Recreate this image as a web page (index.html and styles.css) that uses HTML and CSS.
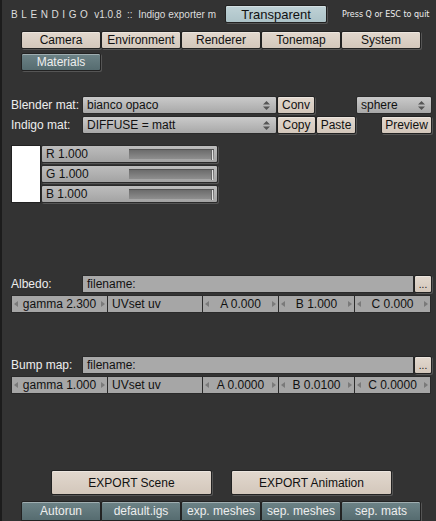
FILE: index.html
```html
<!DOCTYPE html>
<html lang="en">
<head>
    <meta charset="UTF-8">
    <title>Blendigo</title>
    <link rel="stylesheet" href="styles.css">
</head>
<body>
    <div class="app">
        <!-- header -->
        <div class="header">
            <div class="title"><span class="logo">BLENDIGO</span> v1.0.8 &nbsp;:: &nbsp;Indigo exporter m</div>
            <button class="btn btn-blue transparent">Transparent</button>
            <div class="quit">Press Q or ESC to quit</div>
        </div>

        <!-- tabs -->
        <div class="row tabs">
            <button class="btn btn-beige tab">Camera</button>
            <button class="btn btn-beige tab">Environment</button>
            <button class="btn btn-beige tab">Renderer</button>
            <button class="btn btn-beige tab">Tonemap</button>
            <button class="btn btn-beige tab">System</button>
        </div>
        <div class="row tabs tabs2">
            <button class="btn btn-teal tab">Materials</button>
        </div>

        <!-- materials -->
        <div class="row mat-row first">
            <div class="label">Blender mat:</div>
            <div class="menu wide"><span>bianco opaco</span><svg viewBox="0 0 7 9"><path d="M3.5 0L7 3.5H0z M3.5 9L0 5.5h7z"/></svg></div>
            <button class="btn btn-beige conv">Conv</button>
            <div class="menu sphere"><span>sphere</span><svg viewBox="0 0 7 9"><path d="M3.5 0L7 3.5H0z M3.5 9L0 5.5h7z"/></svg></div>
        </div>
        <div class="row mat-row">
            <div class="label">Indigo mat:</div>
            <div class="menu wide"><span>DIFFUSE = matt</span><svg viewBox="0 0 7 9"><path d="M3.5 0L7 3.5H0z M3.5 9L0 5.5h7z"/></svg></div>
            <button class="btn btn-beige copy">Copy</button>
            <button class="btn btn-beige paste">Paste</button>
            <button class="btn btn-beige preview">Preview</button>
        </div>

        <!-- colour -->
        <div class="row colour">
            <div class="swatch"></div>
            <div class="sliders">
                <div class="slider"><span>R 1.000</span><div class="track"><i></i></div></div>
                <div class="slider"><span>G 1.000</span><div class="track"><i></i></div></div>
                <div class="slider"><span>B 1.000</span><div class="track"><i></i></div></div>
            </div>
        </div>

        <!-- albedo -->
        <div class="row file-row albedo">
            <div class="label">Albedo:</div>
            <div class="field">filename:</div>
            <button class="btn btn-beige dots">...</button>
        </div>
        <div class="row nums">
            <div class="num gamma"><b class="la"></b>gamma 2.300<b class="ra"></b></div>
            <div class="num uv">UVset uv</div>
            <div class="num abc"><b class="la"></b>A 0.000<b class="ra"></b></div>
            <div class="num abc"><b class="la"></b>B 1.000<b class="ra"></b></div>
            <div class="num abc"><b class="la"></b>C 0.000<b class="ra"></b></div>
        </div>

        <!-- bump -->
        <div class="row file-row bump">
            <div class="label">Bump map:</div>
            <div class="field">filename:</div>
            <button class="btn btn-beige dots">...</button>
        </div>
        <div class="row nums">
            <div class="num gamma"><b class="la"></b>gamma 1.000<b class="ra"></b></div>
            <div class="num uv">UVset uv</div>
            <div class="num abc"><b class="la"></b>A 0.0000<b class="ra"></b></div>
            <div class="num abc"><b class="la"></b>B 0.0100<b class="ra"></b></div>
            <div class="num abc"><b class="la"></b>C 0.0000<b class="ra"></b></div>
        </div>

        <!-- export -->
        <div class="row export">
            <button class="btn btn-beige big">EXPORT Scene</button>
            <button class="btn btn-beige big">EXPORT Animation</button>
        </div>
        <div class="row tabs bottom">
            <button class="btn btn-teal tab">Autorun</button>
            <button class="btn btn-teal tab">default.igs</button>
            <button class="btn btn-teal tab">exp. meshes</button>
            <button class="btn btn-teal tab">sep. meshes</button>
            <button class="btn btn-teal tab">sep. mats</button>
        </div>
    </div>
</body>
</html>
```

FILE: styles.css
```css
* {
    box-sizing: border-box;
}

body {
    margin: 0;
    background-color: #333;
    font-family: "Liberation Sans", Arial, sans-serif;
    font-size: 12px;
    color: #e6e6e6;
    height: 521px;
    overflow: hidden;
}

.app {
    height: 521px;
    border-left: 2px solid #1c1c1c;
    padding-left: 9px;
    display: flex;
    flex-direction: column;
}

.row {
    display: flex;
    align-items: center;
}

/* header */
.header {
    display: flex;
    align-items: center;
    height: 29px;
    padding-bottom: 1px;
}

.title {
    width: 214px;
    white-space: nowrap;
    overflow: hidden;
    font-size: 10px;
    color: #ddd;
}

.logo {
    letter-spacing: 3.6px;
}

.quit {
    margin-left: 15px;
    font-family: "DejaVu Sans", sans-serif;
    font-size: 8px;
    color: #eee;
}

/* buttons */
.btn {
    font-family: "Liberation Sans", Arial, sans-serif;
    font-size: 12px;
    height: 18px;
    padding: 0;
    margin: 0;
    border: 1px solid #222;
    border-radius: 2px;
    color: #111;
    box-shadow: inset 0 1px 0 rgba(255, 255, 255, 0.35), 1px 1px 0 #555;
    cursor: pointer;
}

.btn-beige {
    background: linear-gradient(#e2d8ce, #d3c7bb);
}

.btn-blue {
    background: linear-gradient(#bfd2d6, #adc3c8);
}

.btn-teal {
    background: linear-gradient(#6d8387, #566c70);
    color: #eee;
}

.transparent {
    width: 102px;
    font-size: 13px;
}

.tabs {
    margin-left: 10px;
    margin-top: 2px;
}

.tab {
    width: 80px;
}

.tabs2 {
    margin-top: 4px;
}

/* material rows */
.mat-row {
    height: 18px;
    margin-top: 2px;
}

.mat-row.first {
    margin-top: 25px;
}

.label {
    width: 71px;
    white-space: nowrap;
    color: #eee;
}

.menu {
    height: 18px;
    display: flex;
    align-items: center;
    justify-content: space-between;
    padding: 0 6px 0 4px;
    border: 1px solid #2a2a2a;
    border-radius: 2px;
    background: linear-gradient(#cacaca, #a8a8a8);
    color: #111;
}

.menu svg {
    width: 7px;
    height: 9px;
    fill: #555;
}

.wide {
    width: 195px;
}

.sphere {
    width: 76px;
    margin-left: 41px;
}

.conv {
    width: 38px;
}

.copy {
    width: 39px;
}

.paste {
    width: 40px;
}

.preview {
    width: 51px;
    margin-left: 25px;
}

/* colour */
.colour {
    margin-top: 11px;
    align-items: stretch;
}

.swatch {
    width: 30px;
    height: 58px;
    background: #fff;
    border: 1px solid #222;
}

.sliders {
    display: flex;
    flex-direction: column;
    gap: 2px;
}

.slider {
    width: 177px;
    height: 18px;
    display: flex;
    align-items: center;
    justify-content: space-between;
    padding: 0 3px 0 4px;
    border: 1px solid #2a2a2a;
    border-radius: 2px;
    background: linear-gradient(#bdbdbd, #a3a3a3);
    color: #111;
    box-shadow: 1px 1px 0 #555;
}

.track {
    width: 85px;
    height: 10px;
    background: linear-gradient(#6c6c6c, #8e8e8e);
    border-top: 1px solid #555;
    position: relative;
}

.track i {
    position: absolute;
    right: 1px;
    top: 0;
    width: 2px;
    height: 10px;
    background: #e4e4e4;
    border-left: 1px solid #666;
}

/* file rows */
.file-row {
    height: 18px;
}

.albedo {
    margin-top: 72px;
}

.bump {
    margin-top: 43px;
}

.field {
    width: 332px;
    height: 18px;
    display: flex;
    align-items: center;
    padding-left: 4px;
    border: 1px solid #2a2a2a;
    background: #a9a9a9;
    color: #111;
}

.dots {
    width: 18px;
    font-size: 10px;
}

.nums {
    margin-top: 2px;
    height: 18px;
}

.num {
    height: 18px;
    display: flex;
    align-items: center;
    justify-content: center;
    gap: 3px;
    border: 1px solid #2a2a2a;
    border-left: none;
    background: #a6a6a6;
    color: #111;
    white-space: nowrap;
}

.num:first-child {
    border-left: 1px solid #2a2a2a;
}

.gamma {
    width: 97px;
    justify-content: space-between;
    padding: 0 2px;
}

.uv {
    width: 95px;
    justify-content: flex-start;
    padding-left: 4px;
}

.abc {
    width: 76px;
    justify-content: space-between;
    padding: 0 2px;
}

.la, .ra {
    width: 0;
    height: 0;
    border-top: 3px solid transparent;
    border-bottom: 3px solid transparent;
}

.la {
    border-right: 4px solid #7a7a7a;
}

.ra {
    border-left: 4px solid #7a7a7a;
}

/* export */
.export {
    margin-top: 76px;
    margin-left: 40px;
    gap: 19px;
}

.big {
    width: 161px;
    height: 25px;
}

.bottom {
    margin-top: 6px;
}

.bottom .tab {
    height: 20px;
    border-radius: 2px 2px 0 0;
}
```
